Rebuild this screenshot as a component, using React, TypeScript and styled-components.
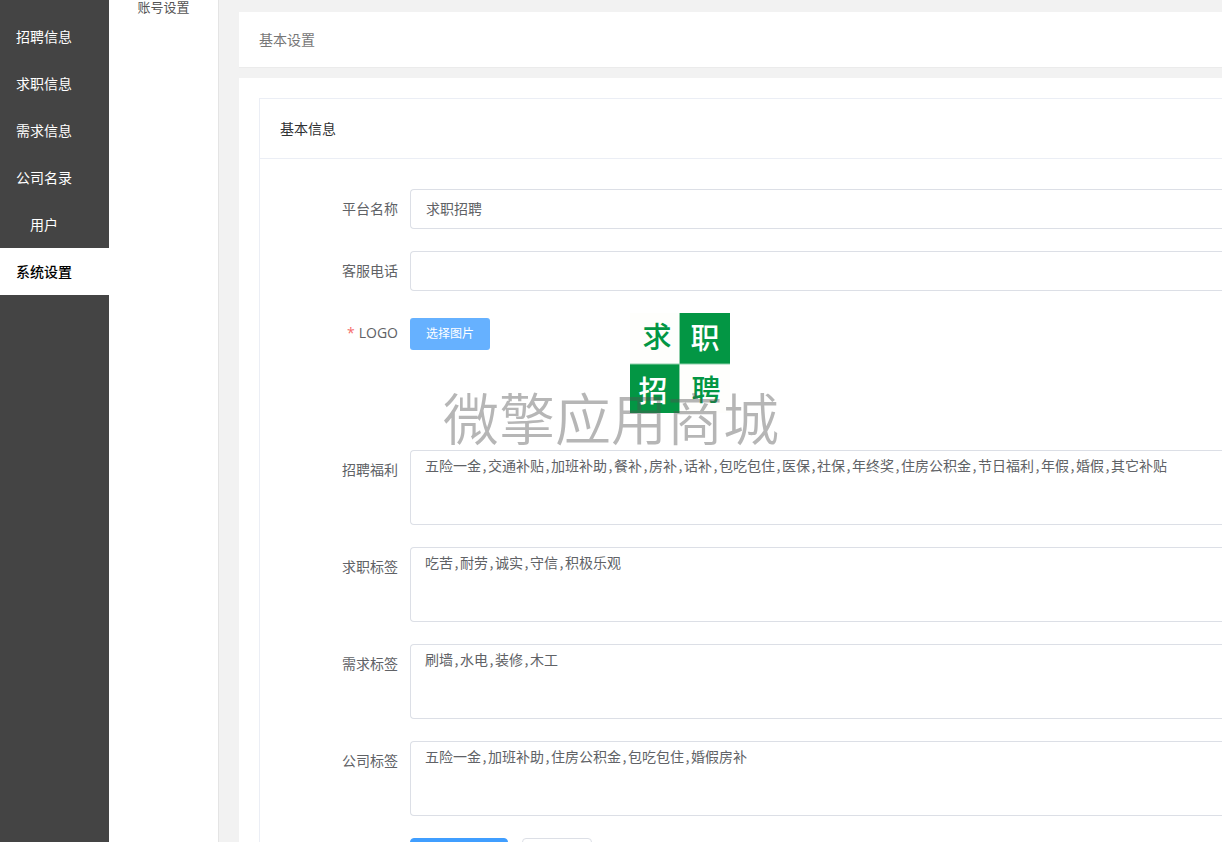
import React from "react";
import styled, { createGlobalStyle, css } from "styled-components";

const GlobalStyle = createGlobalStyle`
  *, *::before, *::after { box-sizing: border-box; }
  body {
    margin: 0;
    font-family: "Open Sans", "Noto Sans CJK SC", sans-serif;
    font-size: 14px;
    color: #606266;
    background: #f2f2f2;
  }
`;

const Shell = styled.div`
  display: flex;
  height: 100vh;
  overflow: hidden;
`;

const MainNav = styled.nav`
  flex: 0 0 109px;
  padding-top: 13px;
  background: #444;
`;

const MainNavLink = styled.a<{ $active?: boolean }>`
  display: block;
  height: 47px;
  padding-right: 21px;
  line-height: 47px;
  text-align: center;
  text-decoration: none;
  color: #fff;
  ${(p) =>
    p.$active &&
    css`
      background: #fff;
      color: #000;
      font-weight: 500;
    `}
`;

const SubNav = styled.nav`
  flex: 0 0 110px;
  border-right: 1px solid #e4e4e4;
  background: #fff;
`;

const SubNavLink = styled.a`
  display: block;
  font-size: 13px;
  line-height: 14px;
  text-align: center;
  text-decoration: none;
  color: #555;
`;

const Content = styled.main`
  flex: 1;
  min-width: 0;
  display: flex;
  flex-direction: column;
  gap: 10px;
  padding: 12px 0 0 20px;
`;

const TitleBar = styled.header`
  flex: none;
  padding: 0 20px;
  border-bottom: 1px solid #ebebeb;
  background: #fff;
  line-height: 55px;
  color: #777;
`;

const Panel = styled.section`
  flex: 1 0 auto;
  padding: 20px 0 20px 20px;
  background: #fff;
`;

const Card = styled.div`
  border: 1px solid #ebeef5;
  border-right: 0;
`;

const CardTitle = styled.h2`
  margin: 0;
  padding: 0 20px;
  border-bottom: 1px solid #ebeef5;
  font-size: 14px;
  font-weight: 400;
  line-height: 59px;
  color: #303133;
`;

const Form = styled.form`
  display: flex;
  flex-direction: column;
  gap: 22px;
  padding: 30px 0 30px 20px;
`;

const Row = styled.div<{ $tall?: boolean }>`
  display: grid;
  grid-template-columns: 130px 1fr;
  align-items: start;
  min-height: ${(p) => (p.$tall ? "115px" : "40px")};
`;

const labelStyle = css`
  padding-right: 12px;
  line-height: 40px;
  text-align: right;
`;

const Label = styled.label`
  ${labelStyle}
`;

const LabelText = styled.span`
  ${labelStyle}
`;

const Required = styled.span`
  margin-right: 4px;
  color: #f56c6c;
`;

const fieldStyle = css`
  display: block;
  width: 100%;
  border: 1px solid #dcdfe6;
  border-right: 0;
  border-radius: 4px 0 0 4px;
  background: #fff;
  font-size: 14px;
  color: #606266;
  outline: none;
`;

const TextInput = styled.input`
  ${fieldStyle}
  height: 40px;
  padding: 0 15px 2px;
  font-family: inherit;
`;

const TextArea = styled.textarea`
  ${fieldStyle}
  height: 75px;
  padding: 4px 14px;
  font-family: "Noto Sans CJK SC", sans-serif;
  font-feature-settings: "hwid";
  line-height: 21px;
  resize: none;
`;

const Upload = styled.div`
  display: grid;
  grid-template-columns: 220px 100px;
  align-items: start;
`;

const PickButton = styled.button`
  justify-self: start;
  width: 80px;
  height: 32px;
  margin-top: 5px;
  padding: 0;
  border: 0;
  border-radius: 3px;
  background: #66b1ff;
  font-family: inherit;
  font-size: 12px;
  line-height: 32px;
  color: #fff;
`;

const Actions = styled.div`
  display: flex;
  gap: 14px;
  padding-left: 130px;
`;

const ActionButton = styled.button<{ $primary?: boolean }>`
  width: ${(p) => (p.$primary ? "98px" : "70px")};
  height: 40px;
  border: 1px solid ${(p) => (p.$primary ? "#409eff" : "#dcdfe6")};
  border-radius: 4px;
  background: ${(p) => (p.$primary ? "#409eff" : "#fff")};
`;

const Watermark = styled.div`
  position: fixed;
  inset: 0;
  display: grid;
  place-items: center;
  padding-bottom: 10px;
  font-family: "Noto Sans CJK SC", sans-serif;
  font-size: 56px;
  font-weight: 350;
  line-height: 60px;
  color: rgba(80, 80, 80, 0.42);
  pointer-events: none;
`;

const LogoSvg = styled.svg`
  display: block;
  font-family: "Noto Sans CJK SC", sans-serif;
  font-size: 29px;
  font-weight: 500;
  text-anchor: middle;
`;

const GREEN = "#039644";

function Logo() {
  return (
    <LogoSvg width="100" height="100" viewBox="0 0 100 100" role="img" aria-label="求职招聘">
      <rect width="100" height="100" fill="#fefefc" />
      <rect x="50" width="50" height="51" fill={GREEN} />
      <rect y="51" width="50" height="49" fill={GREEN} />
      <path d="M49.5 0V100M0 51H100" stroke="#8fcfaa" strokeWidth="1" />
      <text x="27" y="35" fill={GREEN}>求</text>
      <text x="75" y="36" fill="#fff">职</text>
      <text x="23" y="89" fill="#fff">招</text>
      <text x="76" y="88" fill={GREEN}>聘</text>
    </LogoSvg>
  );
}

const NAV = ["招聘信息", "求职信息", "需求信息", "公司名录", "用户", "系统设置"];

const TAG_FIELDS = [
  {
    id: "benefits",
    label: "招聘福利",
    value:
      "五险一金,交通补贴,加班补助,餐补,房补,话补,包吃包住,医保,社保,年终奖,住房公积金,节日福利,年假,婚假,其它补贴",
  },
  { id: "seeker", label: "求职标签", value: "吃苦,耐劳,诚实,守信,积极乐观" },
  { id: "demand", label: "需求标签", value: "刷墙,水电,装修,木工" },
  { id: "company", label: "公司标签", value: "五险一金,加班补助,住房公积金,包吃包住,婚假房补" },
];

export default function App() {
  return (
    <>
      <GlobalStyle />
      <Shell>
        <MainNav>
          {NAV.map((name) => (
            <MainNavLink key={name} href="#" $active={name === "系统设置"}>
              {name}
            </MainNavLink>
          ))}
        </MainNav>
        <SubNav>
          <SubNavLink href="#">账号设置</SubNavLink>
        </SubNav>
        <Content>
          <TitleBar>基本设置</TitleBar>
          <Panel>
            <Card>
              <CardTitle>基本信息</CardTitle>
              <Form onSubmit={(e) => e.preventDefault()}>
                <Row>
                  <Label htmlFor="name">平台名称</Label>
                  <TextInput id="name" type="text" defaultValue="求职招聘" />
                </Row>
                <Row>
                  <Label htmlFor="phone">客服电话</Label>
                  <TextInput id="phone" type="tel" />
                </Row>
                <Row $tall>
                  <LabelText>
                    <Required>*</Required>LOGO
                  </LabelText>
                  <Upload>
                    <PickButton type="button">选择图片</PickButton>
                    <Logo />
                  </Upload>
                </Row>
                {TAG_FIELDS.map((field) => (
                  <Row key={field.id}>
                    <Label htmlFor={field.id}>{field.label}</Label>
                    <TextArea id={field.id} defaultValue={field.value} />
                  </Row>
                ))}
                <Actions>
                  <ActionButton $primary type="submit" aria-label="保存" />
                  <ActionButton type="reset" aria-label="重置" />
                </Actions>
              </Form>
            </Card>
          </Panel>
        </Content>
      </Shell>
      <Watermark>微擎应用商城</Watermark>
    </>
  );
}
